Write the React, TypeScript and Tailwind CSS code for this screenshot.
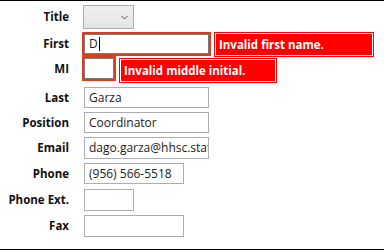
import React from "react";

const font = { fontFamily: '"Open Sans", "Noto Sans", Arial, sans-serif' };

const Label = ({ text }: { text: string }) => (
  <div className="w-[70px] shrink-0 pr-[1px] text-right text-[11.5px] font-bold text-[#111]">{text}</div>
);

const Field = ({ value = "", w }: { value?: string; w: string }) => (
  <div className={`${w} flex h-full items-center overflow-hidden whitespace-nowrap border border-[#abadb3] bg-white pl-[4px] text-[12px] text-[#222]`}>
    {value}
  </div>
);

const ErrorTip = ({ text, w }: { text: string; w: string }) => (
  <div className={`${w} h-[25px] shrink-0 bg-[#f00] p-[1px]`}>
    <div className="flex h-full items-center border border-white pl-[3px] text-[11.5px] font-bold text-white whitespace-nowrap">
      {text}
    </div>
  </div>
);

const Row = ({ label, cls, children }: { label: string; cls: string; children: React.ReactNode }) => (
  <div className={`flex items-center ${cls}`}>
    <Label text={label} />
    <div className="ml-[14px] flex h-full items-start">{children}</div>
  </div>
);

export default function App() {
  return (
    <div style={font} className="flex h-[250px] w-[384px] flex-col border-y border-black bg-white">
      {/* Title */}
      <div className="mt-[4px] flex h-[24px] items-center">
        <Label text="Title" />
        <div className="ml-[13px] flex h-full w-[51px] items-center justify-end border border-[#acacac] bg-gradient-to-b from-[#efefef] to-[#e5e5e5] pr-[5px]">
          <svg width="7" height="5" viewBox="0 0 7 5">
            <path d="M0.5 1 L3.5 4 L6.5 1" fill="none" stroke="#555" strokeWidth="1" />
          </svg>
        </div>
      </div>

      {/* First */}
      <div className="mt-[3px] flex h-[24px] items-center">
        <Label text="First" />
        <div className="ml-[12px] flex h-full items-start">
          <div className="flex h-[24px] w-[129px] border-2 border-[#dc3d1b]">
            <div className="flex h-full w-full items-center border border-[#7a7a7a] bg-white pl-[4px] text-[12px] text-[#222]">
              D<span className="ml-[1px] inline-block h-[14px] w-[1px] bg-black" />
            </div>
          </div>
          <div className="ml-[3px]">
            <ErrorTip text="Invalid first name." w="w-[160px]" />
          </div>
        </div>
      </div>

      {/* MI */}
      <div className="flex h-[25px] items-center">
        <Label text="MI" />
        <div className="ml-[12px] flex h-full items-start">
          <div className="flex h-[25px] w-[34px] border-2 border-[#dc3d1b]">
            <div className="h-full w-full border border-[#7a7a7a] bg-white" />
          </div>
          <div className="ml-[3px] mt-[2px]">
            <ErrorTip text="Invalid middle initial." w="w-[158px]" />
          </div>
        </div>
      </div>

      <Row label="Last" cls="mt-[6px] h-[21px]">
        <Field value="Garza" w="w-[125px]" />
      </Row>
      <Row label="Position" cls="mt-[4px] h-[21px]">
        <Field value="Coordinator" w="w-[125px]" />
      </Row>
      <Row label="Email" cls="mt-[4px] h-[22px]">
        <Field value="dago.garza@hhsc.state.tx.us" w="w-[125px]" />
      </Row>
      <Row label="Phone" cls="mt-[4px] h-[21px]">
        <Field value="(956) 566-5518" w="w-[100px]" />
      </Row>
      <Row label="Phone Ext." cls="mt-[5px] h-[22px]">
        <Field w="w-[50px]" />
      </Row>
      <Row label="Fax" cls="mt-[4px] h-[22px]">
        <Field w="w-[100px]" />
      </Row>
    </div>
  );
}
